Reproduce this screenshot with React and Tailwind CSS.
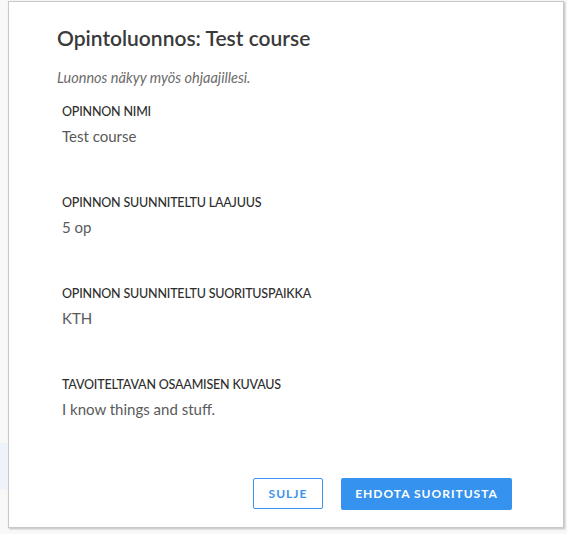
export default function App() {
  const fields = [
    { label: "OPINNON NIMI", value: "Test course" },
    { label: "OPINNON SUUNNITELTU LAAJUUS", value: "5 op" },
    { label: "OPINNON SUUNNITELTU SUORITUSPAIKKA", value: "KTH" },
    { label: "TAVOITELTAVAN OSAAMISEN KUVAUS", value: "I know things and stuff." },
  ];

  return (
    <div
      className="relative h-[534px] w-[567px] overflow-hidden bg-[#f8f8f8] pl-2 pt-px"
      style={{ fontFamily: "Lato, 'Noto Sans', sans-serif" }}
    >
      {/* faint background page strip */}
      <div className="absolute left-0 top-[443px] h-[47px] w-2 bg-[#eef3f9]" />

      <div className="flex h-[527px] w-[556px] flex-col border border-[#c8c8c8] bg-white pl-12 pr-[51px] pt-[22px] shadow-[1px_1px_2px_rgba(0,0,0,0.25)]">
        <h2 className="text-[21px] font-semibold leading-[28px] text-[#3a3a3a]">
          Opintoluonnos: Test course
        </h2>
        <p className="mt-[17px] text-[14.5px] italic leading-[18px] text-[#6b6b6b]">
          Luonnos näkyy myös ohjaajillesi.
        </p>

        <div className="ml-[5px] mt-[16px] flex flex-col gap-[48px]">
          {fields.map((f) => (
            <div key={f.label} className="flex flex-col gap-[5px]">
              <div className="text-[12.5px] font-medium leading-[18px] tracking-[-0.2px] text-[#2e2e2e]">
                {f.label}
              </div>
              <div className="text-[15px] leading-[20px] text-[#5a5a5a]">
                {f.value}
              </div>
            </div>
          ))}
        </div>

        <div className="mt-auto mb-[17px] flex justify-end gap-[18px]">
          <button className="h-[31px] w-[70px] rounded-[2px] border-[1.5px] border-[#3a93ee] bg-white text-[12px] font-bold tracking-[1px] text-[#3a93ee]">
            SULJE
          </button>
          <button className="h-[32px] w-[171px] rounded-[2px] bg-[#3592ee] text-[12px] font-bold tracking-[1px] text-white">
            EHDOTA SUORITUSTA
          </button>
        </div>
      </div>
    </div>
  );
}
